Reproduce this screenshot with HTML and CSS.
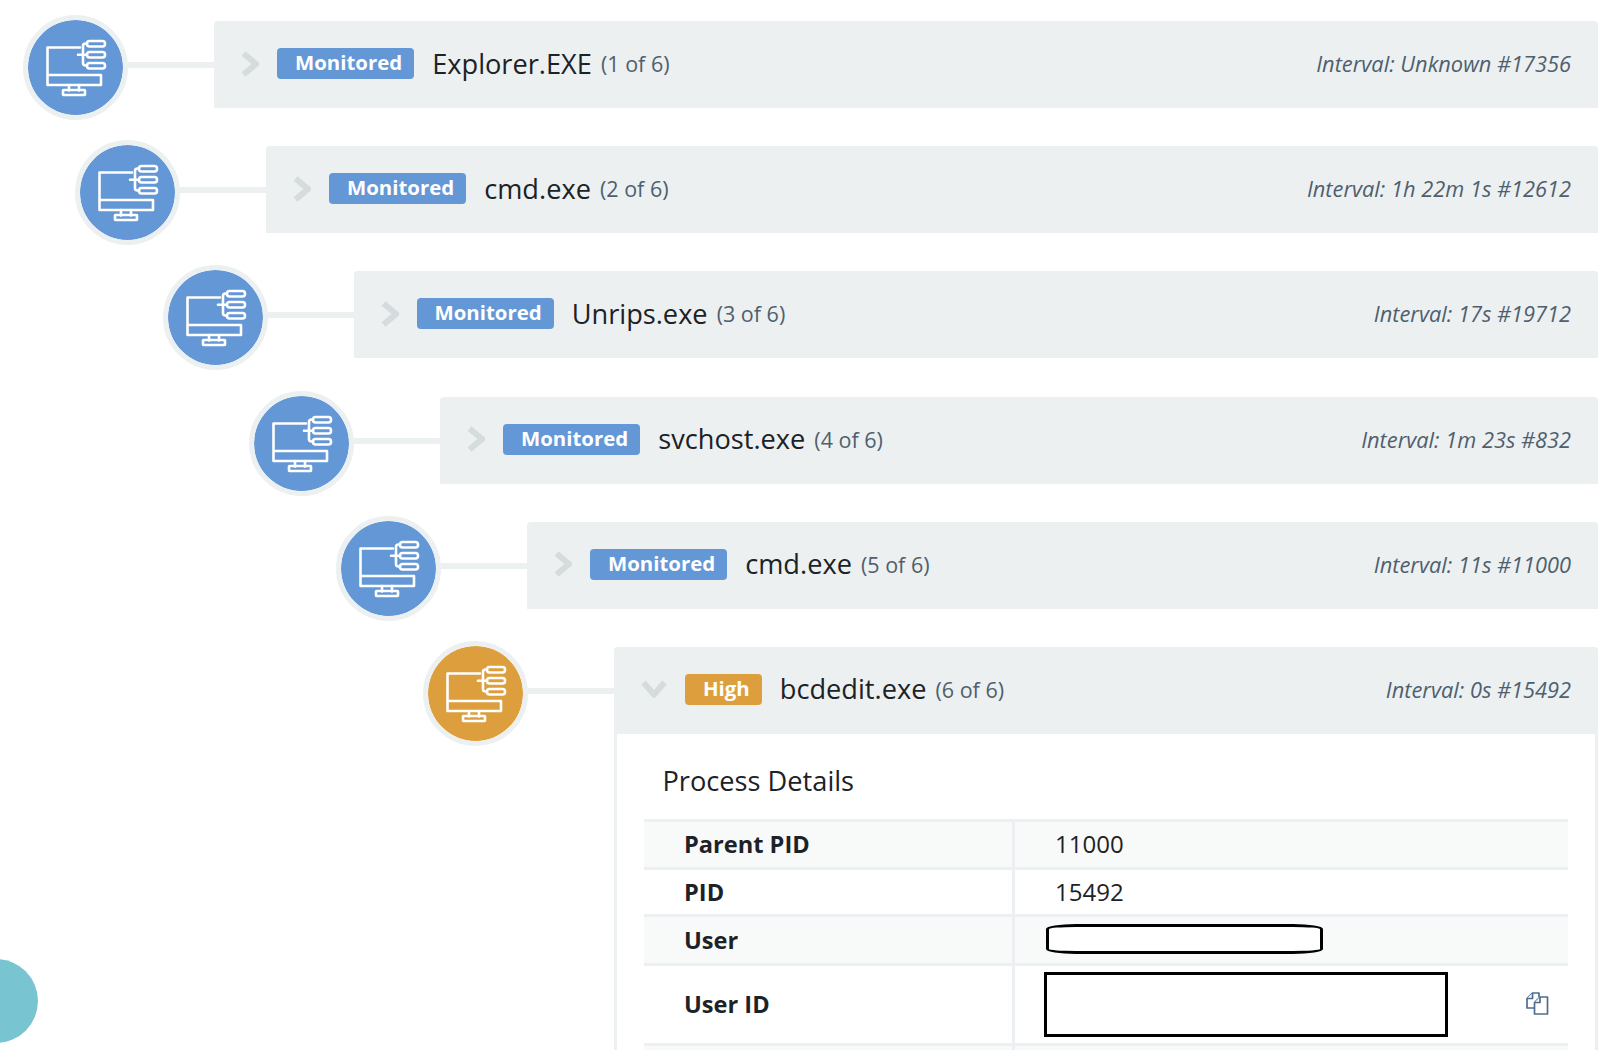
FILE: index.html
```html
<!DOCTYPE html>
<html lang="en">
<head>
<meta charset="utf-8">
<title>Process tree</title>
<link rel="stylesheet" href="styles.css">
</head>
<body>
<svg class="defs" width="0" height="0" aria-hidden="true">
  <symbol id="proc" viewBox="-1 -0.5 105 105">
    <g fill="none" stroke="#fff" stroke-width="2.6" stroke-linejoin="round" stroke-linecap="round">
      <path d="M56 32H23.5V69.500H77V59.500H23.500"/>
      <path d="M45 69.500V75M55 69.500V75"/>
      <rect x="39" y="74.500" width="22" height="5" rx="0.5"/>
      <rect x="63" y="25.500" width="18" height="5.500" rx="2.500"/>
      <rect x="63" y="36.500" width="18" height="5.500" rx="2.500"/>
      <rect x="63" y="47.500" width="18" height="5.500" rx="2.500"/>
      <path d="M63 28H61.500Q59 28 59 30.500V47.500Q59 50 61.500 50H63M54 39.300H63"/>
    </g>
  </symbol>
</svg>
<main class="tree">
  <section class="row r1">
    <div class="node blue"><svg class="node-icon"><use href="#proc"/></svg></div>
    <div class="link"></div>
    <div class="card">
      <header class="bar">
        <svg class="chev" viewBox="0 0 18 26"><path d="M2.500 2.500L15 13L2.500 23.500"/></svg>
        <span class="badge blue">Monitored</span>
        <span class="name">Explorer.EXE</span><span class="count">(1 of 6)</span>
        <span class="interval">Interval: Unknown #17356</span>
      </header>
    </div>
  </section>
  <section class="row r2">
    <div class="node blue"><svg class="node-icon"><use href="#proc"/></svg></div>
    <div class="link"></div>
    <div class="card">
      <header class="bar">
        <svg class="chev" viewBox="0 0 18 26"><path d="M2.500 2.500L15 13L2.500 23.500"/></svg>
        <span class="badge blue">Monitored</span>
        <span class="name">cmd.exe</span><span class="count">(2 of 6)</span>
        <span class="interval">Interval: 1h 22m 1s #12612</span>
      </header>
    </div>
  </section>
  <section class="row r3">
    <div class="node blue"><svg class="node-icon"><use href="#proc"/></svg></div>
    <div class="link"></div>
    <div class="card">
      <header class="bar">
        <svg class="chev" viewBox="0 0 18 26"><path d="M2.500 2.500L15 13L2.500 23.500"/></svg>
        <span class="badge blue">Monitored</span>
        <span class="name">Unrips.exe</span><span class="count">(3 of 6)</span>
        <span class="interval">Interval: 17s #19712</span>
      </header>
    </div>
  </section>
  <section class="row r4">
    <div class="node blue"><svg class="node-icon"><use href="#proc"/></svg></div>
    <div class="link"></div>
    <div class="card">
      <header class="bar">
        <svg class="chev" viewBox="0 0 18 26"><path d="M2.500 2.500L15 13L2.500 23.500"/></svg>
        <span class="badge blue">Monitored</span>
        <span class="name">svchost.exe</span><span class="count">(4 of 6)</span>
        <span class="interval">Interval: 1m 23s #832</span>
      </header>
    </div>
  </section>
  <section class="row r5">
    <div class="node blue"><svg class="node-icon"><use href="#proc"/></svg></div>
    <div class="link"></div>
    <div class="card">
      <header class="bar">
        <svg class="chev" viewBox="0 0 18 26"><path d="M2.500 2.500L15 13L2.500 23.500"/></svg>
        <span class="badge blue">Monitored</span>
        <span class="name">cmd.exe</span><span class="count">(5 of 6)</span>
        <span class="interval">Interval: 11s #11000</span>
      </header>
    </div>
  </section>
  <section class="row r6">
    <div class="node gold"><svg class="node-icon"><use href="#proc"/></svg></div>
    <div class="link"></div>
    <div class="card open">
      <header class="bar">
        <svg class="chev down" viewBox="0 0 26 18"><path d="M2.500 2.500L13 14.500L23.500 2.500"/></svg>
        <span class="badge gold">High</span>
        <span class="name">bcdedit.exe</span><span class="count">(6 of 6)</span>
        <span class="interval">Interval: 0s #15492</span>
      </header>
      <div class="details">
        <h2 class="details-title">Process Details</h2>
        <div class="table">
          <div class="tr shade first"><div class="th">Parent PID</div><div class="td">11000</div></div>
          <div class="tr"><div class="th">PID</div><div class="td">15492</div></div>
          <div class="tr shade user"><div class="th">User</div><div class="td"><div class="redact-oval"></div></div></div>
          <div class="tr tall"><div class="th">User ID</div><div class="td"><div class="redact-box"></div>
            <svg class="copy" viewBox="0 0 24 24"><path d="M9 17H2V7.500L7.500 2H14V6"/><path d="M7.500 2V7.500H2"/><path d="M9.500 11.500L15 6H22.500V23H9.500Z"/><path d="M15 6V11.500H9.500"/></svg>
          </div></div>
          <div class="tr shade"><div class="th"></div><div class="td"></div></div>
        </div>
      </div>
    </div>
  </section>
</main>
<div class="fab"></div>
</body>
</html>
```
FILE: styles.css
```css
* { box-sizing: border-box; }
html, body { margin: 0; height: 1050px; overflow: hidden; background: #fff; }
body { font-family: "Open Sans", "Noto Sans", sans-serif; color: #1c2226; }
.defs { position: absolute; }

.tree { display: flex; flex-direction: column; gap: 20.2px; padding-top: 15px; padding-right: 2px; }
.row { display: flex; align-items: flex-start; }
.r1 { margin-left: 23px; }
.r2 { margin-left: 75px; }
.r3 { margin-left: 162.5px; }
.r4 { margin-left: 249px; }
.r5 { margin-left: 336px; }
.r6 { margin-left: 423px; }

.node { flex: none; width: 105px; height: 105px; border-radius: 50%; border: 5px solid #ecf0f1; background-clip: padding-box; position: relative; }
.node.blue { background-color: #6497d6; }
.node.gold { background-color: #dd9f3d; }
.node-icon { position: absolute; left: -5px; top: -5px; width: 105px; height: 105px; }

.link { flex: none; width: 86px; height: 6px; margin-top: 47px; background: #ecf0f1; }

.card { flex: 1; min-width: 0; margin-top: 6px; }
.bar { height: 87px; display: flex; align-items: center; gap: 18px; padding: 0 27px 2px 27px; background: #ecf0f1; border-radius: 4px 4px 0 0; }
.chev { flex: none; width: 18px; height: 26px; fill: none; stroke: #d5dcde; stroke-width: 6; }
.chev.down { width: 26px; height: 18px; }

.badge { flex: none; height: 31px; padding: 0 12px 0 18px; border-radius: 4px; color: #fff; font-size: 20.4px; font-weight: 700; line-height: 29px; }
.badge.blue { background: #6497d6; }
.badge.gold { background: #dd9f3d; }

.name { font-size: 27.2px; line-height: 36px; color: #1c2226; }
.count { font-size: 21.5px; color: #4f5f6e; margin-left: -9px; }
.interval { margin-left: auto; font-size: 21.8px; font-style: italic; color: #4f5f6e; }

.details { border: solid #ecf0f1; border-width: 0 3px; padding: 26px 27px 0 27px; height: 400px; }
.details-title { margin: 0 0 17px 18.5px; font-size: 27.2px; font-weight: 400; line-height: 42px; color: #1c2226; }
.table { border-top: 3px solid #edf0f2; }
.tr { display: grid; grid-template-columns: 368px 1fr; min-height: 47px; border-bottom: 3px solid #edf0f2; font-size: 24px; line-height: 44px; }
.tr.shade { background: #f8f9f9; }
.tr.first { min-height: 48px; }
.tr.user { min-height: 49px; }
.tr.tall { min-height: 80px; }
.th { font-size: 23.6px; font-weight: 700; padding-left: 40px; display: flex; align-items: center; }
.td { position: relative; padding-left: 40px; border-left: 3px solid #edf0f2; display: flex; align-items: center; color: #1c2226; }

.redact-oval { margin-left: -9px; width: 277px; height: 30px; margin-top: -1px; background: #fff; border: 3px solid #000; border-radius: 30px / 5px; }
.redact-box { margin-left: -11.5px; width: 404px; height: 65px; margin-top: 1px; background: #fff; border: 3px solid #000; }
.copy { flex: none; width: 24px; height: 24px; margin-left: 77.5px; margin-top: -2px; fill: #fff; stroke: #4f6d8f; stroke-width: 1.7; stroke-linejoin: round; }

.fab { position: absolute; left: -46px; top: 959px; width: 84px; height: 84px; border-radius: 50%; background: #78c4d0; }
```
